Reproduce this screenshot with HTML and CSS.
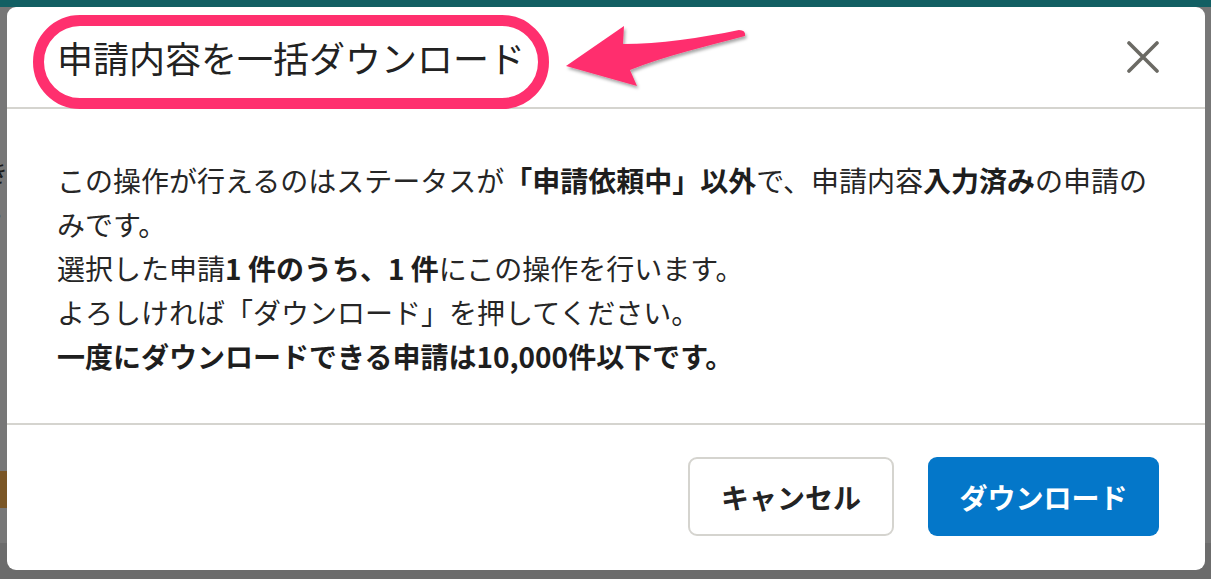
FILE: index.html
```html
<!DOCTYPE html>
<html lang="ja">
<head>
<meta charset="utf-8">
<title>申請内容を一括ダウンロード</title>
<link rel="stylesheet" href="styles.css">
</head>
<body>
<div class="page">
  <header class="topbar"></header>
  <div class="page-body">
    <div class="frag-text">き</div>
    <div class="frag-dot">・</div>
    <div class="frag-btn"></div>
  </div>
</div>

<div class="overlay">
  <div class="modal" role="dialog">
    <div class="modal-header">
      <h2 class="modal-title">申請内容を一括ダウンロード</h2>
      <button class="close-btn" aria-label="閉じる">
        <svg width="32" height="32" viewBox="0 0 32 32"><path d="M2 2 L30 30 M30 2 L2 30" stroke="#6b6a64" stroke-width="3.6" stroke-linecap="round" fill="none"/></svg>
      </button>
    </div>
    <div class="modal-body">
      <p>この操作が行えるのはステータスが<b>「申請依頼中」以外</b>で、申請内容<b>入力済み</b>の申請のみです。</p>
      <p>選択した申請<b>1 件のうち、1 件</b>にこの操作を行います。</p>
      <p>よろしければ「ダウンロード」を押してください。</p>
      <p><b>一度にダウンロードできる申請は10,000件以下です。</b></p>
    </div>
    <div class="modal-footer">
      <button class="btn btn-cancel">キャンセル</button>
      <button class="btn btn-primary">ダウンロード</button>
    </div>
  </div>
</div>

<svg class="annotation" width="1211" height="579" viewBox="0 0 1211 579">
  <defs>
    <filter id="sh" x="-10%" y="-10%" width="130%" height="140%">
      <feDropShadow dx="1.5" dy="2.5" stdDeviation="1.5" flood-color="#000" flood-opacity="0.35"/>
    </filter>
  </defs>
  <rect x="38.5" y="20.5" width="505" height="83" rx="41.5" ry="41.5" fill="none" stroke="#ff2f6e" stroke-width="11"/>
  <path filter="url(#sh)" fill="#ff2f6e" d="M566 66 L624 26 L623 44 C 660 44, 700 38, 739 30 Q 746 30 745 36 C 708 46, 664 56, 630 70 L637 86 Z"/>
</svg>
</body>
</html>
```
FILE: styles.css
```css
* { box-sizing: border-box; }
html, body { margin: 0; padding: 0; }
body {
  width: 1211px;
  height: 579px;
  overflow: hidden;
  background: #6c6c6c;
  font-family: "Noto Sans CJK JP", "Noto Sans", sans-serif;
  position: relative;
}
.page { width: 100%; height: 100%; display: flex; flex-direction: column; }
.topbar { height: 7px; background: #125f63; flex: none; }
.page-body {
  height: 536px;
  background: #777777;
  padding-top: 150px;
  display: flex;
  flex-direction: column;
}
.frag-text { margin-left: -16px; font-size: 24px; line-height: 30px; color: #1a1a1a; }
.frag-dot { margin-left: -12px; font-size: 20px; line-height: 30px; color: #333; margin-top: 14px; }
.frag-btn { width: 40px; margin-top: 240px; height: 37px; background: #7a5626; }

.overlay {
  position: absolute;
  inset: 0;
  padding: 7px 6px 9px 7px;
  display: flex;
}
.modal {
  flex: 1;
  background: #fff;
  border-radius: 9px;
  display: flex;
  flex-direction: column;
  overflow: hidden;
}
.modal-header {
  height: 102px;
  border-bottom: 2px solid #d5d4cf;
  display: flex;
  align-items: center;
  justify-content: space-between;
  padding: 0 46px 0 50px;
  flex: none;
}
.modal-title {
  margin: 0;
  font-size: 36px;
  font-weight: 400;
  color: #222;
  letter-spacing: 0;
  line-height: 1;
}
.close-btn {
  border: 0;
  background: none;
  padding: 0;
  width: 32px;
  height: 32px;
  display: flex;
}
.modal-body {
  flex: 1;
  padding: 49px 50px 0 50px;
  border-bottom: 2px solid #d5d4cf;
  color: #262626;
  font-size: 28px;
  line-height: 44px;
}
.modal-body p { margin: 0; }
.modal-body b { font-weight: 700; color: #1e1e1e; }
.modal-footer {
  height: 145px;
  flex: none;
  display: flex;
  justify-content: flex-end;
  align-items: center;
  gap: 34px;
  padding: 0 46px 2px 0;
}
.btn {
  height: 79px;
  border-radius: 9px;
  font-family: "Noto Sans CJK JP", "Noto Sans", sans-serif;
  font-size: 28px;
  font-weight: 700;
  padding: 0;
  white-space: nowrap;
  display: flex;
  align-items: center;
  justify-content: center;
}
.btn-cancel {
  background: #fff;
  border: 2px solid #d5d4cf;
  color: #232323;
  width: 206px;
}
.btn-primary {
  background: #0477c9;
  border: 0;
  color: #fff;
  width: 231px;
}
.annotation {
  position: absolute;
  left: 0;
  top: 0;
  pointer-events: none;
}
```
